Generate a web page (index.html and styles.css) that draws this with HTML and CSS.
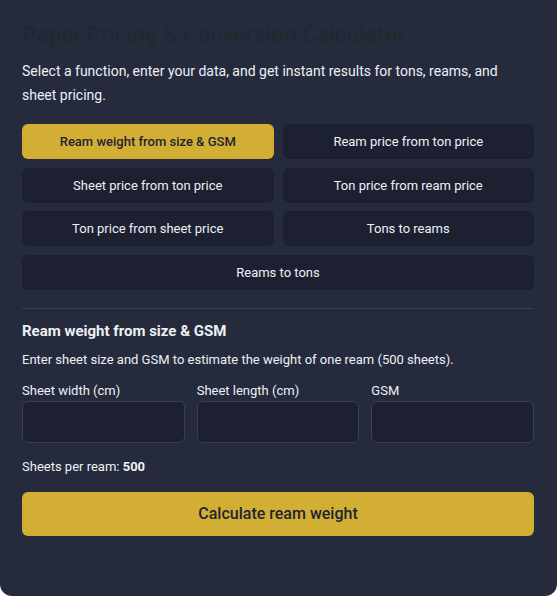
FILE: index.html
```html
<!DOCTYPE html>
<html lang="en">
<head>
<meta charset="utf-8">
<title>Paper Pricing &amp; Conversion Calculator</title>
<link rel="stylesheet" href="styles.css">
</head>
<body>
<main class="card">
  <h1 class="title">Paper Pricing &amp; Conversion Calculator</h1>
  <p class="intro">Select a function, enter your data, and get instant results for tons, reams, and sheet pricing.</p>
  <div class="modes">
    <button class="mode active">Ream weight from size &amp; GSM</button>
    <button class="mode">Ream price from ton price</button>
    <button class="mode">Sheet price from ton price</button>
    <button class="mode">Ton price from ream price</button>
    <button class="mode">Ton price from sheet price</button>
    <button class="mode">Tons to reams</button>
    <button class="mode wide">Reams to tons</button>
  </div>
  <hr class="divider">
  <section class="panel">
    <h2 class="panel-title">Ream weight from size &amp; GSM</h2>
    <p class="panel-desc">Enter sheet size and GSM to estimate the weight of one ream (500 sheets).</p>
    <div class="fields">
      <label class="field"><span class="field-label">Sheet width (cm)</span><input class="input" type="text"></label>
      <label class="field"><span class="field-label">Sheet length (cm)</span><input class="input" type="text"></label>
      <label class="field"><span class="field-label">GSM</span><input class="input" type="text"></label>
    </div>
    <p class="note">Sheets per ream: <strong>500</strong></p>
    <button class="calc">Calculate ream weight</button>
  </section>
</main>
</body>
</html>
```
FILE: styles.css
```css
* { box-sizing: border-box; }
html, body { margin: 0; padding: 0; background: #ffffff; }
body { font-family: Roboto, "Noto Sans", "Liberation Sans", sans-serif; color: #eef0f4; }
.card {
  background: #252b3d;
  min-height: 100vh;
  border-radius: 0 0 12px 12px;
  padding: 21px 23px 60px 22px;
  display: flex;
  flex-direction: column;
}
.title {
  margin: 0;
  font-size: 22.5px;
  line-height: 26px;
  font-weight: 500;
  color: #1f2a2f;
}
.intro {
  margin: 12px 0 0;
  font-size: 14px;
  line-height: 24px;
}
.modes {
  margin-top: 17px;
  display: grid;
  grid-template-columns: 1fr 1fr;
  gap: 8.5px 9px;
}
.mode {
  height: 35px;
  border: 0;
  border-radius: 6px;
  background: #1c2030;
  color: #eef0f4;
  font-family: inherit;
  font-size: 13px;
  padding: 0 10px;
}
.mode.active { background: #d2ae35; color: #1f2433; font-weight: 500; }
.mode.wide { grid-column: 1 / 3; }
.divider {
  margin: 18px 0 0;
  border: 0;
  border-top: 1px solid #364054;
}
.panel { display: flex; flex-direction: column; }
.panel-title {
  margin: 12px 0 0;
  font-size: 15px;
  line-height: 20px;
  font-weight: 700;
}
.panel-desc {
  margin: 10px 0 0;
  font-size: 13px;
  line-height: 18px;
}
.fields {
  margin-top: 14px;
  display: grid;
  grid-template-columns: repeat(3, 1fr);
  gap: 12px;
}
.field { display: flex; flex-direction: column; gap: 2px; }
.field-label { font-size: 13px; line-height: 16px; }
.input {
  height: 42px;
  background: #1c2030;
  border: 1px solid #3a4050;
  border-radius: 6px;
  color: #eef0f4;
  font-family: inherit;
  font-size: 14px;
  padding: 0 10px;
  width: 100%;
}
.note {
  margin: 16px 0 0;
  font-size: 13px;
  line-height: 16px;
}
.note strong { font-weight: 700; }
.calc {
  margin-top: 17px;
  height: 44px;
  border: 0;
  border-radius: 6px;
  background: #d2ae35;
  color: #1f2433;
  font-family: inherit;
  font-size: 16px;
  font-weight: 500;
}
```
